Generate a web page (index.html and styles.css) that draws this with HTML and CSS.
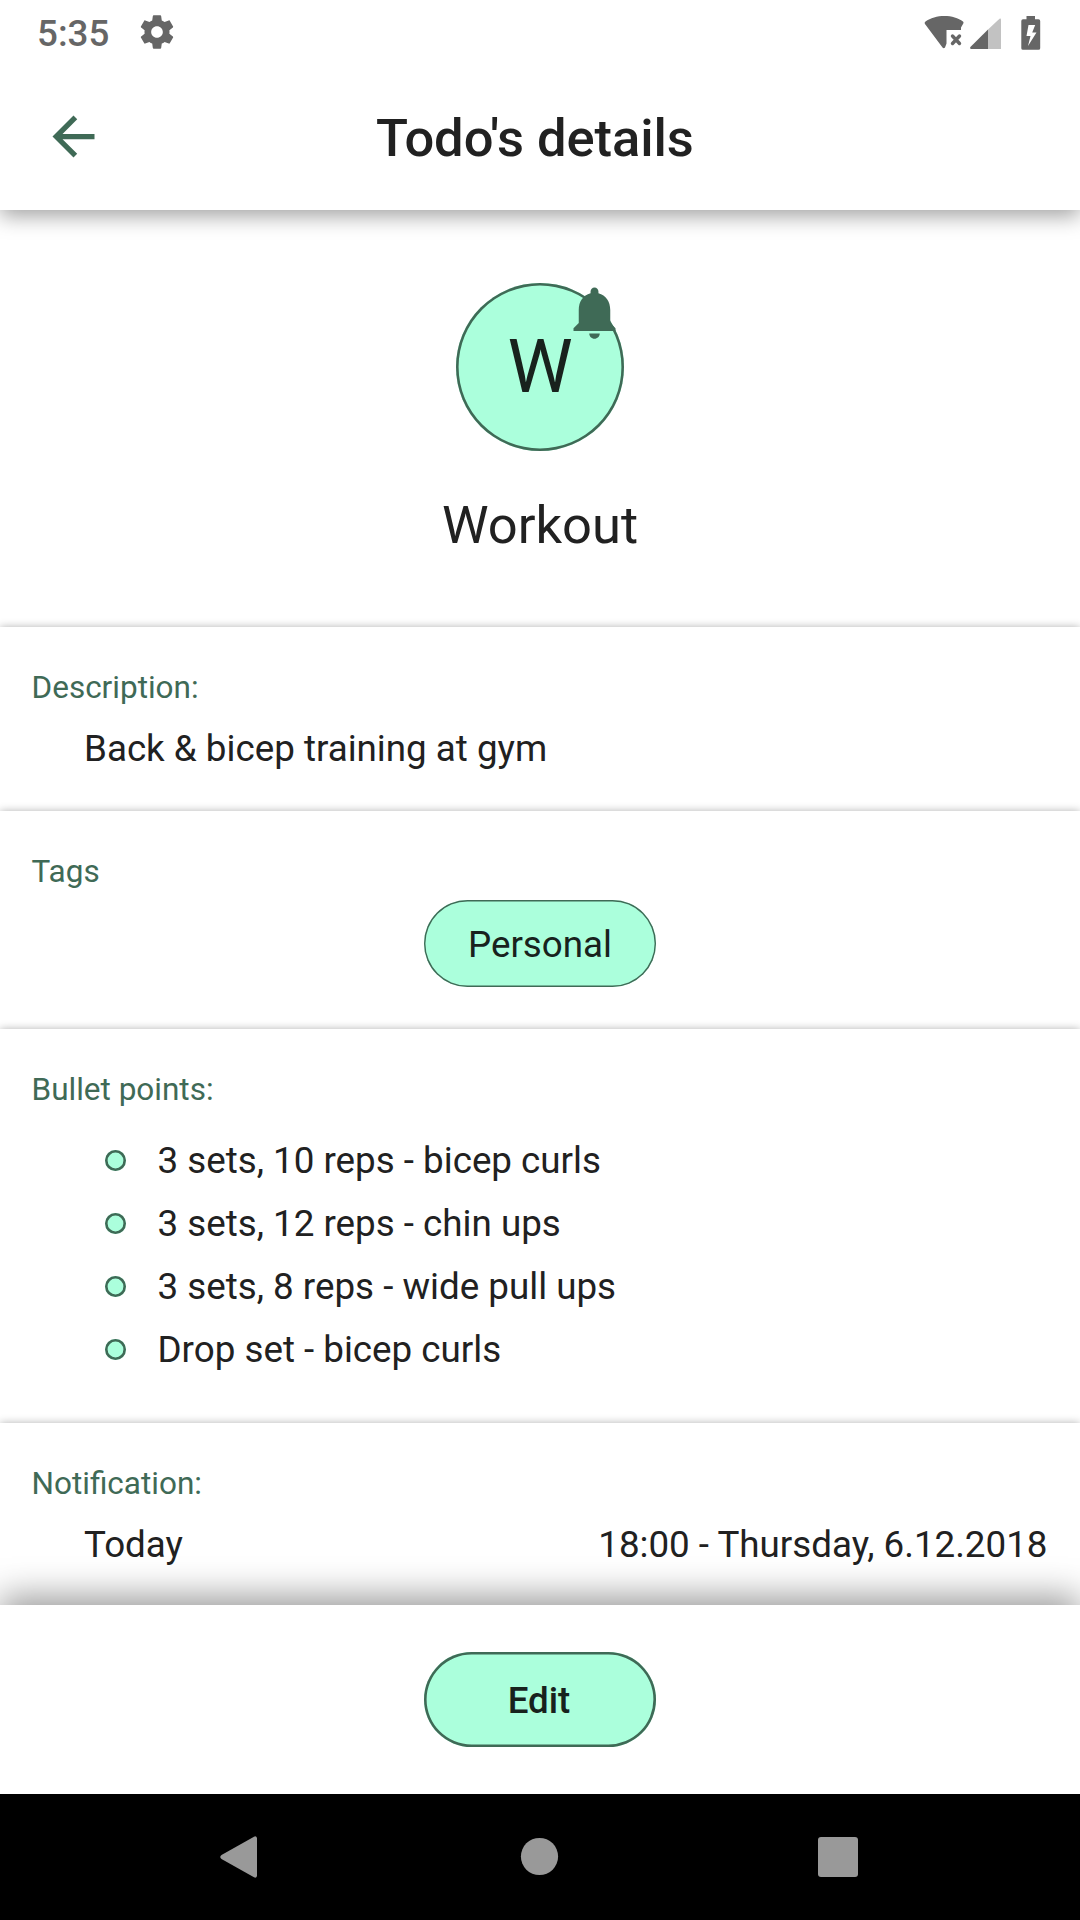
FILE: index.html
```html
<!DOCTYPE html>
<html lang="en">
<head>
<meta charset="utf-8">
<title>Todo's details</title>
<link rel="stylesheet" href="styles.css">
</head>
<body>
<div class="screen">
  <header class="top">
    <div class="status">
      <span class="clock">5:35</span>
      <svg class="gear" viewBox="0 0 24 24"><path d="M19.43 12.98c.04-.32.07-.64.07-.98s-.03-.66-.07-.98l2.11-1.65c.19-.15.24-.42.12-.64l-2-3.46c-.12-.22-.39-.3-.61-.22l-2.49 1c-.52-.4-1.08-.73-1.69-.98l-.38-2.65C14.46 2.18 14.25 2 14 2h-4c-.25 0-.46.18-.49.42l-.38 2.65c-.61.25-1.17.59-1.69.98l-2.49-1c-.23-.09-.49 0-.61.22l-2 3.46c-.13.22-.07.49.12.64l2.11 1.65c-.04.32-.07.65-.07.98s.03.66.07.98l-2.11 1.65c-.19.15-.24.42-.12.64l2 3.46c.12.22.39.3.61.22l2.49-1c.52.4 1.08.73 1.69.98l.38 2.65c.03.24.24.42.49.42h4c.25 0 .46-.18.49-.42l.38-2.65c.61-.25 1.17-.59 1.69-.98l2.49 1c.23.09.49 0 .61-.22l2-3.46c.12-.22.07-.49-.12-.64l-2.11-1.65zM12 15.5c-1.93 0-3.5-1.57-3.5-3.5s1.57-3.5 3.5-3.5 3.500 1.570 3.500 3.500-1.570 3.500-3.500 3.500z"/></svg>
      <svg class="signals" viewBox="0 0 122 40">
        <path d="M1.500 9.500C11 2 30 2 39 9.500q1 1 .3 2L37 15.500V18H22.500V31.500L21 35.500q-1.200 1.300-2.500 0L.8 11.800q-.6-1.300.7-2.300z"/>
        <path class="cross" d="M28.500 24l7 7.500M35.500 24l-7 7.500"/>
        <path class="faint" d="M64 17.500L75.500 6.700q1.500-.9 1.500.8V37H64z"/>
        <path d="M64 17.500V37H47q-1.700-.3-.6-1.900z"/>
        <path fill-rule="evenodd" d="M102.500 4h8.500v3.300h3.500q1.700 0 1.700 1.700v27.200q0 1.600-1.700 1.600H99q-1.700 0-1.700-1.600V9q0-1.700 1.700-1.700h3.500zM104.500 13l-2 11h4l-2.500 10 8.500-13.500h-4.300l3-7.500z"/>
      </svg>
    </div>
    <div class="appbar">
      <svg class="back" viewBox="0 0 24 24"><path d="M20 11H7.830l5.590-5.590L12 4l-8 8 8 8 1.410-1.410L7.830 13H20v-2z"/></svg>
      <h1 class="title">Todo's details</h1>
    </div>
  </header>

  <main>
    <section class="hero">
      <div class="avatar">W
        <svg class="bell" viewBox="0 0 24 24"><path d="M12 22c1.100 0 2-.9 2-2h-4c0 1.100.89 2 2 2zm6-6v-5c0-3.070-1.640-5.640-4.500-6.320V4c0-.83-.67-1.500-1.500-1.500s-1.500.67-1.500 1.500v.68C7.630 5.360 6 7.920 6 11v5l-2 2v1h16v-1l-2-2z"/></svg>
      </div>
      <div class="name">Workout</div>
    </section>
    <section class="card description">
      <h2 class="label">Description:</h2>
      <p class="value">Back &amp; bicep training at gym</p>
    </section>
    <section class="card tags">
      <h2 class="label">Tags</h2>
      <span class="tag">Personal</span>
    </section>
    <section class="card bullets">
      <h2 class="label">Bullet points:</h2>
      <ul class="list">
        <li>3 sets, 10 reps - bicep curls</li>
        <li>3 sets, 12 reps - chin ups</li>
        <li>3 sets, 8 reps - wide pull ups</li>
        <li>Drop set - bicep curls</li>
      </ul>
    </section>
    <section class="card notification">
      <h2 class="label">Notification:</h2>
      <p class="value"><span>Today</span><span>18:00 - Thursday, 6.12.2018</span></p>
    </section>
  </main>

  <footer class="actions"><button class="edit">Edit</button></footer>
  <nav class="nav">
    <svg viewBox="0 0 48 48"><path d="M39 5v38q-.8 2.500-3 1.300L3.500 26q-2.500-2 0-4L36 3.700q2.200-1.200 3 1.300z"/></svg>
    <svg viewBox="0 0 48 48"><circle cx="23.500" cy="23.500" r="18.600"/></svg>
    <svg viewBox="0 0 48 48"><rect x="4" y="4" width="40" height="40" rx="3"/></svg>
  </nav>
</div>
</body>
</html>
```
FILE: styles.css
```css
*, *::before { box-sizing: border-box; margin: 0; padding: 0; }
body { background: #fff; font-family: Roboto, sans-serif; color: #212121; }
.screen { width: 1080px; height: 1920px; display: flex; flex-direction: column; overflow: hidden; }
svg { display: block; flex: none; }

.top { height: 210px; flex: none; background: #fff; position: relative; z-index: 1; box-shadow: 0 6px 20px rgba(0, 0, 0, .37); }
.status { height: 63px; display: flex; align-items: center; padding: 1px 35px 0 37px; fill: #666; }
.clock { font-size: 36.75px; font-weight: 500; line-height: 67px; padding-top: 3px; color: #666; }
.gear { width: 40px; height: 40px; margin-left: 28px; }
.signals { width: 122px; height: 40px; margin: 0 -1px 0 auto; }
.cross { stroke: #666; stroke-width: 3.4; stroke-linecap: round; }
.faint { fill: #c2c2c2; }
.appbar { height: 147px; display: flex; align-items: center; padding-left: 42px; }
.back { width: 63px; height: 63px; fill: #3f6a56; }
.title { margin-left: 271px; font-size: 52.5px; font-weight: 500; line-height: 63px; padding-top: 3px; letter-spacing: -.05px; }

main { height: 1395px; flex: none; }
.hero { height: 417px; padding-top: 73px; display: flex; flex-direction: column; align-items: center; background: #fff; }
.avatar { position: relative; width: 168px; height: 168px; box-shadow: inset 0 0 0 2.6px #3f6a56; border-radius: 50%; background: #abffdc; color: #18221d; font-size: 73.5px; line-height: 168px; text-align: center; }
.bell { position: absolute; left: 107px; top: -2px; width: 63px; height: 63px; fill: #3f6a56; }
.name { margin-top: 43px; font-size: 52.5px; line-height: 62px; }

.card { background: #fff; box-shadow: 0 0 8px rgba(0, 0, 0, .3); padding: 42px 31.5px 0; }
.label { font-size: 31.5px; line-height: 37px; font-weight: 400; color: #3f6a56; }
.value { font-size: 36.75px; line-height: 43px; margin-top: 21px; padding: 0 1px 0 52.5px; display: flex; justify-content: space-between; }
.description { height: 184px; }
.tags { height: 218px; display: flex; flex-direction: column; }
.tag { align-self: center; width: 232px; height: 87px; margin-top: 10px; box-shadow: inset 0 0 0 1.4px #3f6a56; border-radius: 44px; background: #abffdc; color: #18221d; font-size: 36.75px; line-height: 90px; text-align: center; }
.bullets { height: 394px; }
.list { list-style: none; margin-top: 21px; padding-left: 73.5px; }
.list li { display: flex; align-items: center; gap: 31.5px; height: 63px; font-size: 36.75px; line-height: 63px; }
.list li::before { content: ""; width: 21px; height: 21px; box-shadow: inset 0 0 0 2.6px #3f6a56; border-radius: 50%; background: #abffdc; }
.notification { height: 182px; }

.actions { position: relative; z-index: 1; height: 189px; flex: none; display: flex; align-items: center; justify-content: center; background: #fff; box-shadow: 0 -9px 33px rgba(0, 0, 0, .39); }
.edit { width: 232px; height: 95px; padding: 3px 2px 0 0; border: 0; box-shadow: inset 0 0 0 2.6px #3f6a56; border-radius: 48px; background: #abffdc; color: #18221d; font: 500 36.75px/92px Roboto, sans-serif; }
.nav { position: relative; z-index: 2; height: 126px; flex: none; display: flex; align-items: center; justify-content: space-between; padding: 0 218px; background: #000; fill: #999; }
.nav svg { width: 48px; height: 48px; }
```
